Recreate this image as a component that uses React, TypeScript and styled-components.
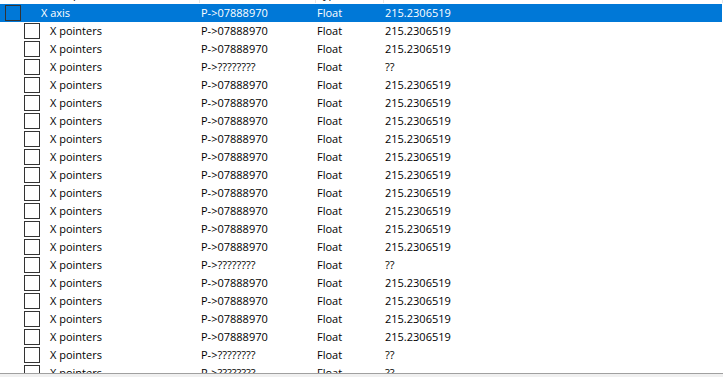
import React from "react";
import styled, { createGlobalStyle } from "styled-components";

const GlobalStyle = createGlobalStyle`
  html, body {
    margin: 0;
    padding: 0;
    background: #fff;
    overflow: hidden;
  }
  body {
    font-family: "Open Sans", "Noto Sans", sans-serif;
    font-size: 11px;
  }
`;

const Window = styled.div`
  width: 723px;
  height: 377px;
  display: flex;
  flex-direction: column;
  background: #fff;
  overflow: hidden;
`;

// only the bottom edge of the column header is visible (scrolled list)
const HeaderClip = styled.div`
  height: 4px;
  overflow: hidden;
  flex-shrink: 0;
`;

const HeaderRow = styled.div`
  display: grid;
  grid-template-columns: 200px 116px 68px 1fr;
  height: 18px;
  margin-top: -15px;
`;

interface HeaderCellProps {
  $pad: number
}

const HeaderCell = styled.div<HeaderCellProps>`
  border-right: 1px solid #e5e5e5;
  padding-left: ${(p) => p.$pad}px;
  line-height: 18px;
  color: #000;
  white-space: nowrap;
  overflow: hidden;
`;

const List = styled.div`
  flex: 1;
  overflow: hidden;
`;

interface RowProps {
  $selected?: boolean
}

const Row = styled.div<RowProps>`
  display: grid;
  grid-template-columns: 200px 116px 68px 1fr;
  height: 18px;
  line-height: 18px;
  width: 722px;
  background: ${(p) => (p.$selected ? "#0078d7" : "transparent")};
  color: ${(p) => (p.$selected ? "#fff" : "#000")};
  white-space: nowrap;
`;

interface IndentProps {
  $indent: number
}

const NameCell = styled.div<IndentProps>`
  display: flex;
  align-items: center;
  padding-left: ${(p) => p.$indent}px;
`;

const Box = styled.span<RowProps>`
  width: 14px;
  height: 14px;
  border: 1px solid #333;
  background: ${(p) => (p.$selected ? "#0078d7" : "#fff")};
  flex-shrink: 0;
`;

const Label = styled.span<IndentProps>`
  margin-left: ${(p) => p.$indent}px;
`;

const Cell = styled.div`
  padding-left: 1px;
  overflow: hidden;
`;

const StatusBar = styled.div`
  height: 3px;
  flex-shrink: 0;
  border-top: 1px solid #a0a0a0;
  background: #f0f0f0;
`;

interface Entry {
  ok: boolean
}

const pattern = [true, true, false, true, true, true, true, true, true, true, true, true, true, false, true, true, true, true, false, false];

const entries: Entry[] = pattern.map((ok) => ({ ok }));

const App: React.FC = () => (
  <Window>
    <GlobalStyle />
    <HeaderClip>
      <HeaderRow>
        <HeaderCell $pad={41}>Description</HeaderCell>
        <HeaderCell $pad={1}>Address</HeaderCell>
        <HeaderCell $pad={1}>Type</HeaderCell>
        <HeaderCell $pad={1}>Value</HeaderCell>
      </HeaderRow>
    </HeaderClip>
    <List>
      <Row $selected>
        <NameCell $indent={5}>
          <Box $selected />
          <Label $indent={20}>X axis</Label>
        </NameCell>
        <Cell>P-&gt;07888970</Cell>
        <Cell>Float</Cell>
        <Cell>215.2306519</Cell>
      </Row>
      {entries.map((e, i) => (
        <Row key={i}>
          <NameCell $indent={24}>
            <Box />
            <Label $indent={10}>X pointers</Label>
          </NameCell>
          <Cell>{e.ok ? "P->07888970" : "P->????????"}</Cell>
          <Cell>Float</Cell>
          <Cell>{e.ok ? "215.2306519" : "??"}</Cell>
        </Row>
      ))}
    </List>
    <StatusBar />
  </Window>
);

export default App;
